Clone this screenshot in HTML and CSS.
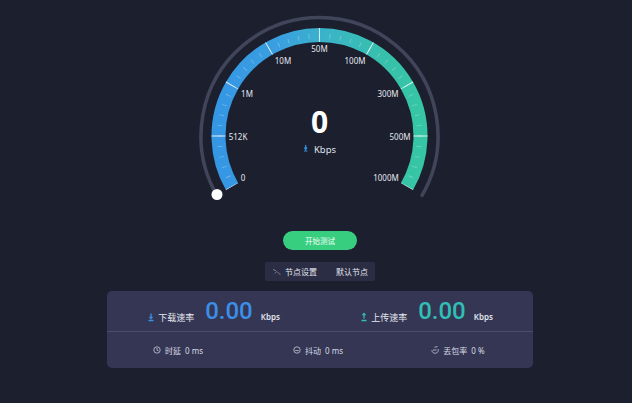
FILE: index.html
```html
<!DOCTYPE html>
<html lang="zh">
<head>
<meta charset="utf-8">
<title>网速测试</title>
<link rel="stylesheet" href="styles.css">
</head>
<body>
<main class="page">
  <svg class="gauge" viewBox="190 5 260 205" width="260" height="205" aria-label="速度表">
    <defs>
      <linearGradient id="band" gradientUnits="userSpaceOnUse" x1="215" y1="0" x2="424" y2="0">
        <stop offset="0" stop-color="#3596e4"/>
        <stop offset="0.3" stop-color="#3a9fe0"/>
        <stop offset="0.55" stop-color="#3ab5c6"/>
        <stop offset="0.8" stop-color="#37c0ac"/>
        <stop offset="1" stop-color="#36c6a4"/>
      </linearGradient>
    </defs>
    <path class="track" d="M216.9 195.25A118.5 118.5 0 1 1 422.1 195.25"/>
    <path class="band" d="M232.03 186.5A101 101 0 1 1 406.97 186.5"/>
    <path class="minor" pathLength="240" d="M232.9 186A100 100 0 1 1 406.1 186"/>
    <path class="major" pathLength="240" d="M232.03 186.5A101 101 0 1 1 406.97 186.5"/>
    <circle class="dot" cx="217" cy="194.5" r="5.5"/>
    <g class="scale">
      <text x="243" y="177">0</text>
      <text x="238" y="136">512K</text>
      <text x="247" y="93">1M</text>
      <text x="283" y="60">10M</text>
      <text x="319.5" y="48">50M</text>
      <text x="355" y="60">100M</text>
      <text x="388" y="93">300M</text>
      <text x="400" y="136">500M</text>
      <text x="386" y="177">1000M</text>
    </g>
    <text class="reading" x="319.5" y="121">0</text>
    <path class="unit-arrow" d="M304 151h3.4M305.7 145v4M304.4 147.7l1.3 1.8 1.3-1.8"/>
    <text class="unit" x="325" y="149">Kbps</text>
  </svg>

  <button class="start" type="button">开始测试</button>

  <div class="nodes">
    <span class="node-set">
      <svg class="node-icon" viewBox="0 0 10 10" width="10" height="10"><path d="M1 2.5l3 1.2M5 4.5l3.5 3.5M3 6.5l1.5-2"/></svg>
      节点设置
    </span>
    <span>默认节点</span>
  </div>

  <section class="panel">
    <div class="rates">
      <div class="rate">
        <svg class="rate-icon down" viewBox="0 0 8 10" width="8" height="10"><path d="M1.5 8.5h5M4 1.5v5M2.5 4.8L4 6.6l1.5-1.8"/></svg>
        <span class="rate-name">下载速率</span>
        <b class="value down-value">0.00</b>
        <span class="rate-unit">Kbps</span>
      </div>
      <div class="rate">
        <svg class="rate-icon up" viewBox="0 0 8 10" width="8" height="10"><path d="M1.5 8.5h5M4 6.5v-5M2.5 3.2L4 1.4l1.5 1.8"/></svg>
        <span class="rate-name">上传速率</span>
        <b class="value up-value">0.00</b>
        <span class="rate-unit">Kbps</span>
      </div>
    </div>
    <div class="stats">
      <div class="stat">
        <svg class="stat-icon" viewBox="0 0 8 8" width="8" height="8"><circle cx="4" cy="4" r="3.2"/><path d="M4 2v2.2l1.5.7"/></svg>
        <span>时延</span><span>0 ms</span>
      </div>
      <div class="stat stat-mid">
        <svg class="stat-icon" viewBox="0 0 8 8" width="8" height="8"><circle cx="4" cy="4" r="3.2"/><path d="M2.2 4.6h3.6"/></svg>
        <span>抖动</span><span>0 ms</span>
      </div>
      <div class="stat stat-last">
        <svg class="stat-icon" viewBox="0 0 8 8" width="8" height="8"><path d="M.9 4a3.2 3.2 0 1 0 6.2-1M2 4h3.5M3.5 1.2l3-.6"/></svg>
        <span>丢包率</span><span>0 %</span>
      </div>
    </div>
  </section>
</main>
</body>
</html>
```

FILE: styles.css
```css
* { box-sizing: border-box; }

html, body {
  margin: 0;
  height: 100%;
}

body {
  background: #1b1f2e;
  color: #e9ebf2;
  font-family: "Noto Sans", "Noto Sans CJK SC", sans-serif;
  overflow: hidden;
}

.page {
  display: flex;
  flex-direction: column;
  align-items: center;
  padding: 5px 0 0 8px;
}

.gauge { display: block; }

.track {
  fill: none;
  stroke: #41455a;
  stroke-width: 3.5;
  stroke-linecap: round;
}

.band {
  fill: none;
  stroke: url(#band);
  stroke-width: 14;
}

.minor {
  fill: none;
  stroke: rgba(255, 255, 255, .28);
  stroke-width: 5;
  stroke-dasharray: .5 5.5;
  stroke-dashoffset: .25;
}

.major {
  fill: none;
  stroke: rgba(255, 255, 255, .85);
  stroke-width: 14;
  stroke-dasharray: .5 29.5;
  stroke-dashoffset: .25;
}

.dot { fill: #fff; }

.scale text {
  fill: #e6e8ee;
  font-size: 8px;
  text-anchor: middle;
  dominant-baseline: central;
}

.reading {
  fill: #fff;
  font-size: 30px;
  font-weight: 700;
  text-anchor: middle;
  dominant-baseline: central;
}

.unit {
  fill: #dfe2ea;
  font-size: 9.5px;
  text-anchor: middle;
  dominant-baseline: central;
}

.unit-arrow {
  fill: none;
  stroke: #3596e4;
  stroke-width: 1.2;
}

.start {
  display: block;
  width: 74px;
  height: 19px;
  margin-top: 21px;
  padding: 0;
  border: 0;
  border-radius: 10px;
  background: #37cf7f;
  color: #d5f5e2;
  font: 500 7.5px "Noto Sans CJK SC", sans-serif;
}

.nodes {
  display: flex;
  justify-content: space-between;
  align-items: center;
  width: 110px;
  height: 19px;
  margin-top: 12px;
  padding: 0 7px;
  border-radius: 2px;
  background: #2b2d45;
  color: #e4e6ee;
  font: 8px "Noto Sans CJK SC", sans-serif;
}

.node-set {
  display: flex;
  align-items: center;
  gap: 3px;
}

.node-icon {
  fill: none;
  stroke: #8d90a4;
  stroke-width: .8;
}

.panel {
  width: 426px;
  height: 77px;
  margin-top: 10px;
  border-radius: 5px;
  background: #343654;
}

.rates {
  display: grid;
  grid-template-columns: 1fr 1fr;
  height: 41px;
  border-bottom: 1px solid #4d4d6b;
}

.rate {
  display: flex;
  align-items: center;
  justify-content: center;
}

.rate-icon {
  fill: none;
  stroke-width: 1.3;
  margin: 12px 3px 0 0;
}

.rate-icon.down { stroke: #3b8fe6; }
.rate-icon.up { stroke: #30bfb4; }

.rate-name {
  padding-top: 12px;
  font: 9px "Noto Sans CJK SC", sans-serif;
  color: #e6e7ee;
}

.value {
  margin: 0 8px 0 11px;
  font: 500 24px/1 Roboto, sans-serif;
}

.down-value { color: #3b8fe6; }
.up-value { color: #30bfb4; }

.rate-unit {
  padding-top: 11px;
  font-size: 8px;
  font-weight: 600;
  color: #e2e4ec;
}

.stats {
  display: grid;
  grid-template-columns: repeat(3, 1fr);
  height: 36px;
}

.stat {
  display: flex;
  align-items: center;
  justify-content: center;
  gap: 4px;
  font-size: 8px;
  color: #d8dae4;
}

.stat-mid { padding-right: 4px; }
.stat-last { padding-right: 8px; }

.stat-icon {
  fill: none;
  stroke: #c9cbd6;
  stroke-width: .8;
}
```
